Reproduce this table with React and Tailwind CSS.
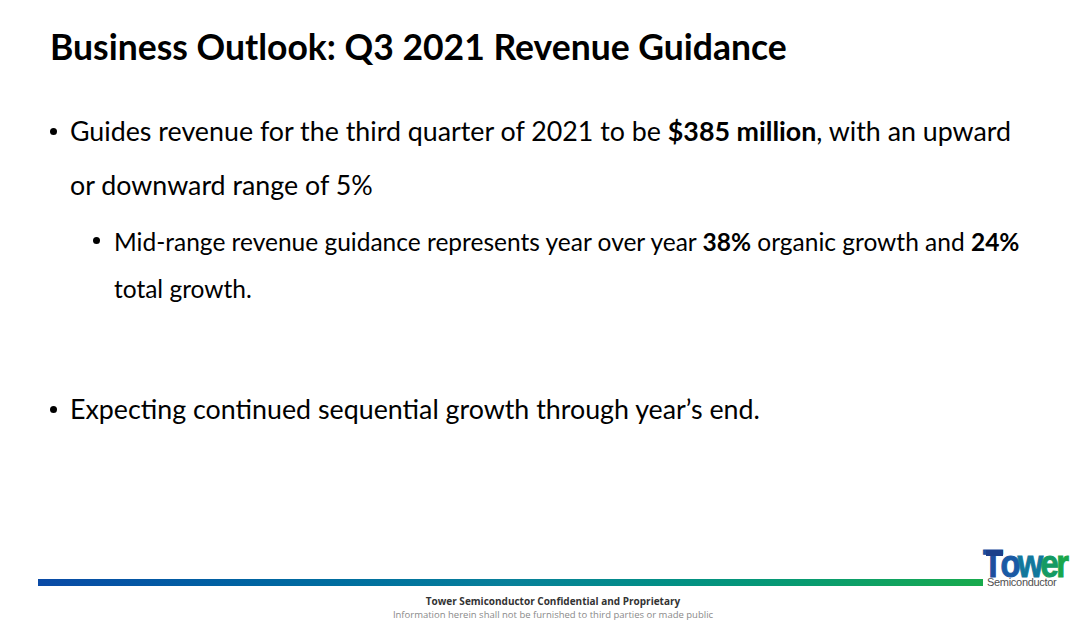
import React from 'react';

const font = { fontFamily: 'Lato, "Open Sans", Arial, sans-serif' };
const arial = { fontFamily: '"Liberation Sans", Arial, sans-serif' };

function Bullet({ sub = false, children, className = '' }) {
  return (
    <div className={`flex ${sub ? 'pl-[93px]' : 'pl-[50px]'} ${className}`}>
      <div className={`shrink-0 ${sub ? 'w-[21px]' : 'w-[20px]'}`}>
        <span className={`block h-[7px] w-[7px] rounded-full bg-black ${sub ? 'mt-[19px]' : 'mt-[24px]'}`} />
      </div>
      <div className="text-black">{children}</div>
    </div>
  );
}

function TowerLogo() {
  return (
    <div className="flex w-[82px] flex-col items-start leading-none" style={arial}>
      <div className="relative h-[30px] w-[82px]">
        <span className="absolute left-[3px] top-[2px] z-10 h-[6px] w-[17px] bg-[#1d3f8a]" />
        <div className="absolute left-0 top-[2px] flex origin-left scale-x-[0.86] whitespace-nowrap text-[38px] font-bold tracking-[-3px] [-webkit-text-stroke:1px_currentColor]">
          <span className="inline-block leading-[28px] text-[#1c4f9e]">T</span>
          <span className="inline-block leading-[28px] text-[#1a5aa5]">o</span>
          <span className="inline-block leading-[28px] text-[#12789c]">w</span>
          <span className="inline-block leading-[28px] text-[#149a63]">e</span>
          <span className="inline-block leading-[28px] text-[#19a64b]">r</span>
        </div>
      </div>
      <span className="pl-[4px] text-[11px] leading-[9px] tracking-[-0.3px] text-[#505050]">Semiconductor</span>
    </div>
  );
}

export default function App() {
  return (
    <div className="flex h-[628px] w-[1080px] flex-col bg-white" style={font}>
      <h1 className="pl-[50px] pt-[27px] text-[35.5px] font-bold leading-[40px] text-black">
        Business Outlook: Q3 2021 Revenue Guidance
      </h1>

      <div className="mt-[37px] text-[26.8px] leading-[54px]">
        <Bullet>
          Guides revenue for the third quarter of 2021 to be <b>$385 million</b>, with an upward
          <br />
          or downward range of 5%
        </Bullet>
        <Bullet sub className="mt-[6px] text-[24.5px] leading-[47px]">
          Mid-range revenue guidance represents year over year <b>38%</b> organic growth and <b>24%</b>
          <br />
          total growth.
        </Bullet>
        <Bullet className="mt-[70px]">
          Expecting continued sequential growth through year&rsquo;s end.
        </Bullet>
      </div>

      <div className="mt-auto flex items-end pl-[38px] pr-[15px]">
        <div className="mb-[1px] h-[7px] flex-1 bg-gradient-to-r from-[#0a4aa6] via-[#08809a] to-[#18aa4c]" />
        <TowerLogo />
      </div>

      <div className="mt-[8px] pb-[7px] pl-[26px] text-center leading-[13px]" style={{ fontFamily: '"Open Sans", Arial, sans-serif' }}>
        <div className="text-[10px] font-bold text-[#333]">Tower Semiconductor Confidential and Proprietary</div>
        <div className="text-[9.5px] text-[#8a8a8a]">Information herein shall not be furnished to third parties or made public</div>
      </div>
    </div>
  );
}
